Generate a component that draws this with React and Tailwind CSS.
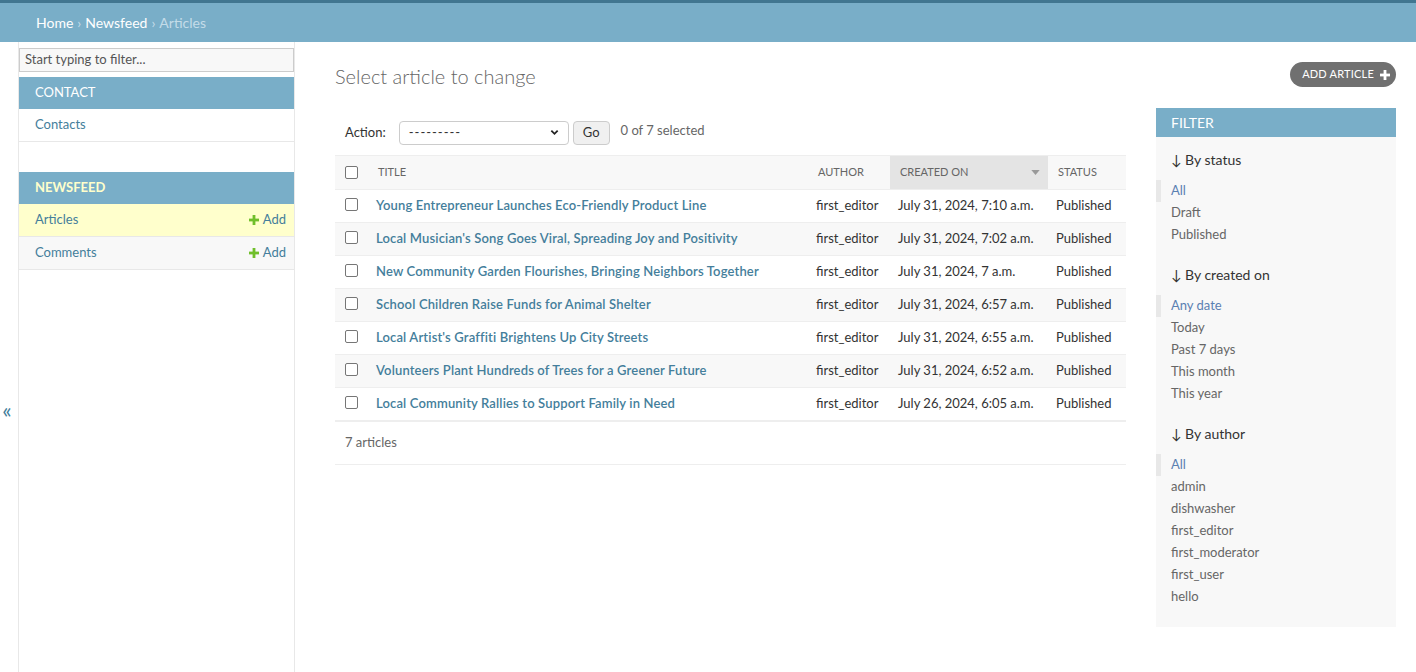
import React from 'react'

const ROWS = [
  { title: 'Young Entrepreneur Launches Eco-Friendly Product Line', created: 'July 31, 2024, 7:10 a.m.' },
  { title: "Local Musician's Song Goes Viral, Spreading Joy and Positivity", created: 'July 31, 2024, 7:02 a.m.' },
  { title: 'New Community Garden Flourishes, Bringing Neighbors Together', created: 'July 31, 2024, 7 a.m.' },
  { title: 'School Children Raise Funds for Animal Shelter', created: 'July 31, 2024, 6:57 a.m.' },
  { title: "Local Artist's Graffiti Brightens Up City Streets", created: 'July 31, 2024, 6:55 a.m.' },
  { title: 'Volunteers Plant Hundreds of Trees for a Greener Future', created: 'July 31, 2024, 6:52 a.m.' },
  { title: 'Local Community Rallies to Support Family in Need', created: 'July 26, 2024, 6:05 a.m.' },
]

const FILTERS = [
  { title: 'By status', items: ['All', 'Draft', 'Published'] },
  { title: 'By created on', items: ['Any date', 'Today', 'Past 7 days', 'This month', 'This year'] },
  { title: 'By author', items: ['All', 'admin', 'dishwasher', 'first_editor', 'first_moderator', 'first_user', 'hello'] },
]

function Plus({ className }) {
  return (
    <svg viewBox="0 0 10 10" className={className} fill="currentColor">
      <rect x="3.6" y="0" width="2.8" height="10" />
      <rect x="0" y="3.6" width="10" height="2.8" />
    </svg>
  )
}

function Box() {
  return <span className="block w-[13px] h-[13px] border border-[#767676] rounded-[2px] bg-white" />
}

export default function App() {
  return (
    <div className="min-h-[672px] bg-white text-[13px] text-[#333] flex flex-col" style={{ fontFamily: 'Lato, "Open Sans", sans-serif' }}>
      {/* Breadcrumbs */}
      <div className="border-t-[3px] border-[#417690] bg-[#79aec8] h-[42px] flex items-center px-9 text-[14px] text-white">
        <span>Home</span>
        <span className="mx-1 text-[#c4dce8]">›</span>
        <span>Newsfeed</span>
        <span className="mx-1 text-[#c4dce8]">›</span>
        <span className="text-[#c4dce8]">Articles</span>
      </div>

      <div className="flex flex-1">
        {/* Sidebar toggle */}
        <div className="w-[19px] border-r border-[#e8e8e8] flex justify-center text-[#447e9b] text-[22px] leading-[28px] pt-[354px] pr-[4px]">«</div>

        {/* Sidebar */}
        <div className="w-[276px] border-r border-[#e8e8e8] pt-[6px]">
          <div className="h-[24px] border border-[#ccc] bg-[#f8f8f8] px-[5px] flex items-center text-[#555] text-[13px]">Start typing to filter...</div>
          <div className="mt-[5px] bg-[#79aec8] h-[32px] flex items-center px-4 text-white">CONTACT</div>
          <div className="h-[33px] flex items-center px-4 text-[#447e9b] border-b border-[#e8e8e8]">Contacts</div>
          <div className="h-[30px]" />
          <div className="bg-[#79aec8] h-[32px] flex items-center px-4 text-[#ffffcc] font-bold">NEWSFEED</div>
          <div className="h-[33px] flex items-center justify-between px-4 pr-2 bg-[#ffffcc] border-b border-[#e8e8e8]">
            <span className="text-[#447e9b]">Articles</span>
            <span className="flex items-center gap-[4px] text-[#447e9b]"><Plus className="w-[10px] h-[10px] text-[#70bf2b]" />Add</span>
          </div>
          <div className="h-[33px] flex items-center justify-between px-4 pr-2 bg-[#f8f8f8] border-b border-[#e8e8e8]">
            <span className="text-[#447e9b]">Comments</span>
            <span className="flex items-center gap-[4px] text-[#447e9b]"><Plus className="w-[10px] h-[10px] text-[#70bf2b]" />Add</span>
          </div>
        </div>

        {/* Main */}
        <div className="flex-1 pl-10 pr-5 pt-5">
          <div className="flex items-start justify-between">
            <h1 className="text-[20px] font-light text-[#666] mt-[-1px]">Select article to change</h1>
            <div className="h-[25px] rounded-[13px] bg-[#707070] text-white text-[11px] flex items-center gap-[6px] pl-3 pr-[6px] tracking-[0.2px]">
              ADD ARTICLE <Plus className="w-[10px] h-[10px]" />
            </div>
          </div>

          <div className="flex gap-[30px] mt-[29px]">
            <div className="w-[791px]">
              {/* Actions */}
              <div className="flex items-center h-[25px] pl-[10px] text-[13px]">
                <span className="text-[#333]">Action:</span>
                <div className="ml-[13px] w-[170px] h-[24px] border border-[#ccc] rounded-[4px] flex items-center justify-between px-[9px]">
                  <span className="text-[#333] tracking-[1px]">---------</span>
                  <svg viewBox="0 0 10 10" className="w-[9px] h-[9px]"><path d="M1.5 3 L5 6.5 L8.5 3" stroke="#222" strokeWidth="2" fill="none" /></svg>
                </div>
                <div className="ml-[4px] h-[24px] px-[9px] border border-[#ccc] rounded-[4px] bg-[#f0f0f0] flex items-center">Go</div>
                <span className="ml-[11px] text-[#666] -mt-[3px]">0 of 7 selected</span>
              </div>

              {/* Table */}
              <table className="w-full mt-[10px] border-collapse">
                <thead>
                  <tr className="h-[34px] bg-[#f8f8f8] border-y border-[#eee] text-[11px] text-[#666] uppercase">
                    <th className="w-[33px] pl-[10px] text-left"><Box /></th>
                    <th className="w-[440px] text-left font-normal pl-[10px]">Title</th>
                    <th className="w-[82px] text-left font-normal pl-[10px]">Author</th>
                    <th className="w-[158px] text-left font-normal pl-[10px] bg-[#e4e4e4]">
                      <div className="flex items-center justify-between pr-[8px]">
                        <span>Created on</span>
                        <svg viewBox="0 0 10 6" className="w-[9px] h-[5px]"><path d="M0 0 L10 0 L5 6 Z" fill="#999" /></svg>
                      </div>
                    </th>
                    <th className="text-left font-normal pl-[10px]">Status</th>
                  </tr>
                </thead>
                <tbody>
                  {ROWS.map((r, i) => (
                    <tr key={i} className={`h-[33px] border-b border-[#eee] ${i % 2 ? 'bg-[#f8f8f8]' : 'bg-white'}`}>
                      <td className="pl-[10px] align-top pt-[8px]"><Box /></td>
                      <td className="pl-2 text-[#447e9b] font-semibold tracking-[0.15px]">{r.title}</td>
                      <td className="pl-2">first_editor</td>
                      <td className="pl-2">{r.created}</td>
                      <td className="pl-2">Published</td>
                    </tr>
                  ))}
                </tbody>
              </table>
              <div className="h-[44px] border-t border-[#eee] border-b flex items-center pl-[10px] text-[#666]">7 articles</div>
            </div>

            {/* Filter */}
            <div className="w-[240px] bg-[#f8f8f8] mt-[-12px] self-start pb-[1px]">
              <div className="h-[29px] bg-[#79aec8] text-white text-[14px] flex items-center px-[15px]">FILTER</div>
              {FILTERS.map((f, fi) => (
                <div key={fi} className="mt-[12px] mb-[18px]">
                  <div className="px-[15px] text-[14px] text-[#333] mb-[10px]">↓ {f.title}</div>
                  {f.items.map((it, ii) => (
                    <div key={ii} className={ii === 0 ? 'h-[22px] flex items-center border-l-[5px] border-[#e8e8e8] pl-[10px] text-[#5b80b2]' : 'h-[22px] flex items-center pl-[15px] text-[#666]'}>{it}</div>
                  ))}
                </div>
              ))}
            </div>
          </div>
        </div>
      </div>
    </div>
  )
}
